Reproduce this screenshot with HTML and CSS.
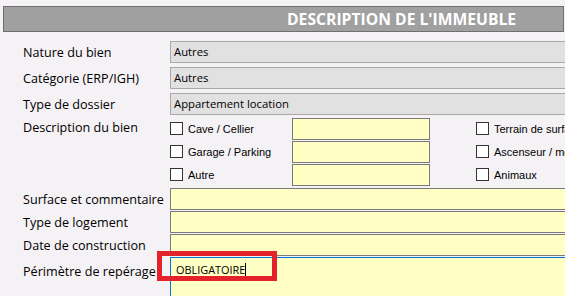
FILE: index.html
```html
<!DOCTYPE html>
<html>
<meta name="viewport" content="width=device-width, initial-scale=1.0">

<head>
    <link rel="stylesheet" href="styles.css">
</head>

<body>
    <div class="title">DESCRIPTION DE L'IMMEUBLE</div>

    <div class="form">
        <div class="row">
            <label>Nature du bien</label>
            <div class="combo">Autres</div>
        </div>
        <div class="row">
            <label>Catégorie (ERP/IGH)</label>
            <div class="combo">Autres</div>
        </div>
        <div class="row">
            <label>Type de dossier</label>
            <div class="combo">Appartement location</div>
        </div>

        <div class="row desc-row">
            <label>Description du bien</label>
            <div class="desc">
                <div class="desc-line">
                    <span class="check"></span>
                    <span class="check-label">Cave / Cellier</span>
                    <div class="box small"></div>
                    <span class="check right"></span>
                    <span class="check-label">Terrain de surface</span>
                </div>
                <div class="desc-line">
                    <span class="check"></span>
                    <span class="check-label">Garage / Parking</span>
                    <div class="box small"></div>
                    <span class="check right"></span>
                    <span class="check-label">Ascenseur / monte-charge</span>
                </div>
                <div class="desc-line">
                    <span class="check"></span>
                    <span class="check-label">Autre</span>
                    <div class="box small"></div>
                    <span class="check right"></span>
                    <span class="check-label">Animaux</span>
                </div>
            </div>
        </div>

        <div class="fields">
            <div class="row">
                <label>Surface et commentaire</label>
                <div class="box"></div>
            </div>
            <div class="row">
                <label>Type de logement</label>
                <div class="box"></div>
            </div>
            <div class="row">
                <label>Date de construction</label>
                <div class="box"></div>
            </div>
            <div class="row memo-row">
                <label>Périmètre de repérage</label>
                <div class="box memo">
                    OBLIGATOIRE<span class="caret"></span>
                    <div class="highlight"></div>
                </div>
            </div>
        </div>
    </div>
</body>

</html>
```

FILE: styles.css
```css
body {
    margin: 0;
    background-color: #f5f2f5;
    color: #000;
    font-family: "Open Sans", "Noto Sans", sans-serif;
    font-size: 12.6px;
    overflow: hidden;
    width: 565px;
    height: 296px;
}

.title {
    margin: 6px 0 0 3px;
    width: 561px;
    height: 26px;
    box-sizing: border-box;
    border: 1px solid #6f6f6f;
    background-color: #a0a0a0;
    color: #fff;
    font-weight: bold;
    font-size: 15.7px;
    line-height: 24px;
    padding-left: 283px;
    white-space: nowrap;
}

.form {
    padding-left: 23px;
    margin-top: 9px;
}

.row {
    display: grid;
    grid-template-columns: 147px 420px;
    align-items: center;
    margin-bottom: 4px;
}

.row label {
    white-space: nowrap;
}

.combo {
    height: 22px;
    box-sizing: border-box;
    border: 1px solid #a9a9a9;
    border-right: none;
    background-color: #e1e1e1;
    padding-left: 3px;
    font-size: 11.3px;
    line-height: 20px;
}

/* Bloc des cases à cocher */
.desc-row {
    align-items: start;
    margin-top: -2px;
    margin-bottom: 2px;
}

.desc-row label {
    line-height: 22px;
}

.desc-line {
    display: grid;
    grid-template-columns: 13px 109px 138px 46px 13px max-content;
    align-items: center;
    height: 23px;
}

.check {
    width: 13px;
    height: 13px;
    box-sizing: border-box;
    border: 1px solid #333;
    background-color: #fff;
}

.check.right {
    grid-column: 5;
}

.check-label {
    font-family: "Liberation Sans", Arial, sans-serif;
    font-size: 11px;
    padding-left: 5px;
    white-space: nowrap;
}

.box {
    height: 22px;
    box-sizing: border-box;
    border: 1px solid #7a7a7a;
    border-right: none;
    background-color: #ffffc4;
}

.box.small {
    border-right: 1px solid #7a7a7a;
}

.fields .row {
    margin-bottom: 1px;
}

.memo-row {
    align-items: start;
}

.memo-row label {
    padding-top: 6px;
}

.box.memo {
    position: relative;
    height: 60px;
    border: 1px solid #0078d7;
    border-right: none;
    padding: 4px 0 0 5px;
    font-size: 10.9px;
    line-height: 16px;
}

.caret {
    display: inline-block;
    width: 1px;
    height: 14px;
    background-color: #000;
    vertical-align: -3px;
}

.highlight {
    position: absolute;
    left: -14px;
    top: -7px;
    width: 120px;
    height: 30px;
    box-sizing: border-box;
    border: 5px solid #e3222b;
}
```
